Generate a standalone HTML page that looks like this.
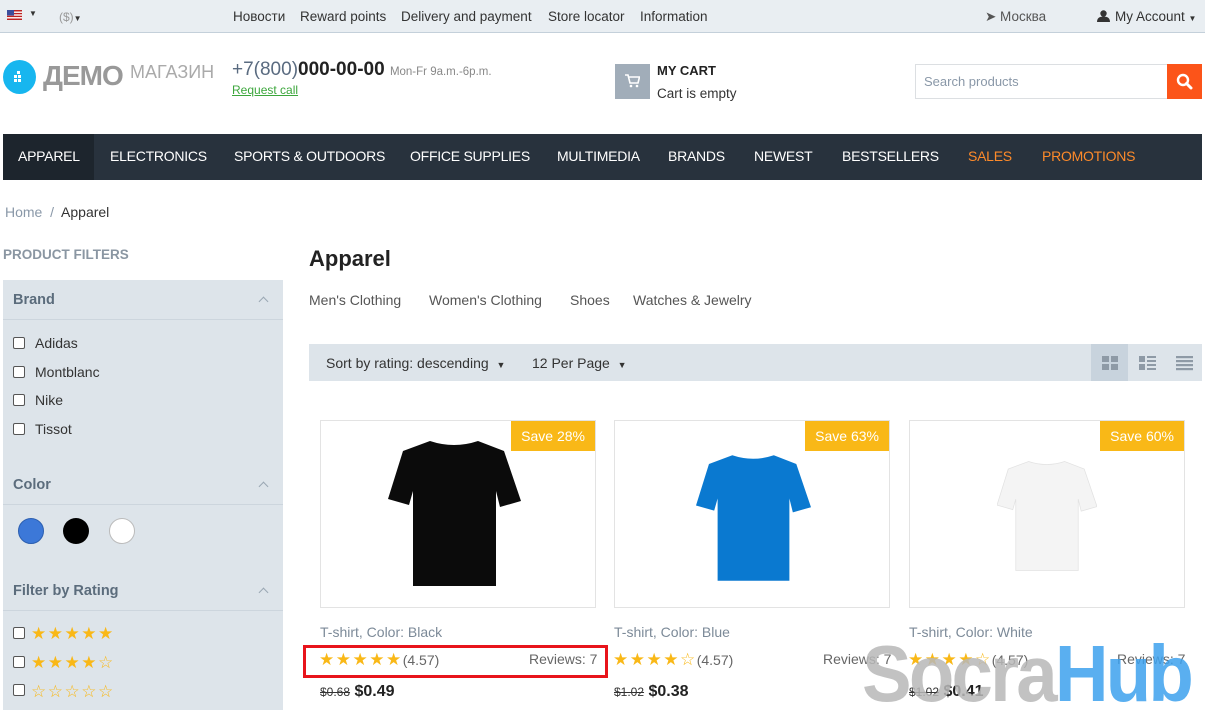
<!DOCTYPE html>
<html><head><meta charset="utf-8">
<style>
*{box-sizing:border-box;margin:0;padding:0}
body{width:1205px;height:710px;overflow:hidden;background:#fff;font-family:"Liberation Sans","DejaVu Sans",sans-serif;color:#333;position:relative}
.a{position:absolute;white-space:nowrap}
.top{left:0;top:0;width:1205px;height:33px;background:#e9eef2;border-bottom:1px solid #c4d0da}
.top .a{top:9px;font-size:13.5px;color:#333}
.nav{left:3px;top:134px;width:1199px;height:46px;background:#28323d}
.nav .a{top:14px;font-size:14px;color:#fff;letter-spacing:-0.25px}
.side{left:3px;top:280px;width:280px;height:430px;background:#dde4ea}
.fh{font-size:14.5px;font-weight:bold;color:#5b6c7c}
.hr{height:1px;background:#ccd5dd;width:280px;left:0}
.cb{width:12px;height:12px;border:1px solid #555;background:#fff;border-radius:2px}
.lbl{font-size:14px;color:#333}
.chev{width:7px;height:7px;border-left:1.5px solid #9aa7b3;border-top:1.5px solid #9aa7b3;transform:rotate(45deg)}
.card{width:276px;height:188px;border:1px solid #e3e3e3;top:420px;background:#fff}
.save{top:0;right:0;background:#f9b817;color:#fff;font-size:14px;padding:7px 10px;height:30px}
.pn{top:624px;font-size:14px;color:#7c8a98}
.rv{top:650px;font-size:14px;color:#555}
.st{color:#f9b817;font-size:17px;letter-spacing:1.5px}
.pr{top:683px;font-size:16px;font-weight:bold;color:#222}
.pr s{font-size:12px;font-weight:normal;color:#333}
</style></head><body>
<div class="a top">
 <svg class="a" style="left:7px;top:10px" width="15" height="10"><rect width="15" height="10" fill="#b22"/><rect y="1.5" width="15" height="1.4" fill="#fff"/><rect y="4.3" width="15" height="1.4" fill="#fff"/><rect y="7.1" width="15" height="1.4" fill="#fff"/><rect width="7" height="5.5" fill="#3a4d9c"/></svg>
 <span class="a" style="left:29px;top:9px;font-size:8px;color:#333">▼</span>
 <span class="a" style="left:59px;color:#999;font-size:12px;top:10px">($)<span style="font-size:8px;color:#333">▼</span></span>
 <span class="a" style="left:233px">Новости</span>
 <span class="a" style="left:300px">Reward points</span>
 <span class="a" style="left:401px">Delivery and payment</span>
 <span class="a" style="left:548px">Store locator</span>
 <span class="a" style="left:640px">Information</span>
 <span class="a" style="left:985px;color:#555">➤ Москва</span>
 <svg class="a" style="left:1097px;top:10px" width="13" height="12"><circle cx="6.5" cy="3.5" r="3.2" fill="#333"/><path d="M0 12 Q0 6.5 6.5 6.5 Q13 6.5 13 12Z" fill="#333"/></svg>
 <span class="a" style="left:1115px">My Account <span style="font-size:8px">▼</span></span>
</div>
<div class="a" style="left:3px;top:60px;width:33px;height:34px;border-radius:50%;background:#17b6ef"></div>
<svg class="a" style="left:14px;top:71px" width="12" height="12"><rect x="3" y="0" width="3" height="3" fill="#fff"/><rect x="0" y="4" width="3" height="3" fill="#fff"/><rect x="4" y="4" width="3" height="3" fill="#fff"/><rect x="0" y="8" width="3" height="3" fill="#fff"/><rect x="4" y="8" width="3" height="3" fill="#fff"/></svg>
<span class="a" style="left:43px;top:60px;font-size:28px;font-weight:bold;color:#999;letter-spacing:-1px">ДЕМО</span>
<span class="a" style="left:130px;top:62px;font-size:18px;color:#aaa">МАГАЗИН</span>
<span class="a" style="left:232px;top:59px;font-size:19px;color:#5a6b80">+7(800)<b style="color:#222">000-00-00</b> <span style="font-size:11.5px;color:#888">Mon-Fr 9a.m.-6p.m.</span></span>
<span class="a" style="left:232px;top:83px;font-size:12px;color:#3ca63c;text-decoration:underline">Request call</span>
<div class="a" style="left:615px;top:64px;width:35px;height:35px;background:#a1adb9"></div>
<svg class="a" style="left:625px;top:74px" width="15" height="14"><path d="M0 1h3l2 8h8l1.5-6H4" fill="none" stroke="#fff" stroke-width="1.6"/><circle cx="6" cy="12" r="1.3" fill="#fff"/><circle cx="12" cy="12" r="1.3" fill="#fff"/></svg>
<span class="a" style="left:657px;top:63px;font-size:13px;font-weight:bold;color:#222">MY CART</span>
<span class="a" style="left:657px;top:86px;font-size:13.5px;color:#333">Cart is empty</span>
<div class="a" style="left:915px;top:64px;width:253px;height:35px;border:1px solid #dcdfe2"></div>
<span class="a" style="left:924px;top:74px;font-size:13px;color:#8a98a8">Search products</span>
<div class="a" style="left:1167px;top:64px;width:35px;height:35px;background:#fc5419"></div>
<svg class="a" style="left:1176px;top:73px" width="17" height="17"><circle cx="7" cy="7" r="5" fill="none" stroke="#fff" stroke-width="2.4"/><path d="M10.5 10.5L15 15" stroke="#fff" stroke-width="3" stroke-linecap="round"/></svg>
<div class="a nav">
 <div class="a" style="left:0;top:0;width:91px;height:46px;background:#1d252d"></div>
 <span class="a" style="left:15px">APPAREL</span>
 <span class="a" style="left:107px">ELECTRONICS</span>
 <span class="a" style="left:231px">SPORTS &amp; OUTDOORS</span>
 <span class="a" style="left:407px">OFFICE SUPPLIES</span>
 <span class="a" style="left:554px">MULTIMEDIA</span>
 <span class="a" style="left:665px">BRANDS</span>
 <span class="a" style="left:751px">NEWEST</span>
 <span class="a" style="left:839px">BESTSELLERS</span>
 <span class="a" style="left:965px;color:#fd8a2a">SALES</span>
 <span class="a" style="left:1039px;color:#fd8a2a">PROMOTIONS</span>
</div>
<span class="a" style="left:5px;top:204px;font-size:14px;color:#8a98a8">Home &nbsp;/&nbsp; <span style="color:#333">Apparel</span></span>
<span class="a" style="left:3px;top:247px;font-size:13.5px;font-weight:bold;color:#8a96a2">PRODUCT FILTERS</span>
<div class="a side">
 <span class="a fh" style="left:10px;top:12px">Brand</span><div class="a chev" style="left:257px;top:18px"></div>
 <div class="a hr" style="top:39px"></div>
 <div class="a cb" style="left:10px;top:57px"></div><span class="a lbl" style="left:32px;top:55px">Adidas</span>
 <div class="a cb" style="left:10px;top:86px"></div><span class="a lbl" style="left:32px;top:84px">Montblanc</span>
 <div class="a cb" style="left:10px;top:114px"></div><span class="a lbl" style="left:32px;top:112px">Nike</span>
 <div class="a cb" style="left:10px;top:143px"></div><span class="a lbl" style="left:32px;top:141px">Tissot</span>
 <span class="a fh" style="left:10px;top:197px">Color</span><div class="a chev" style="left:257px;top:203px"></div>
 <div class="a hr" style="top:224px"></div>
 <div class="a" style="left:15px;top:238px;width:26px;height:26px;border-radius:50%;background:#3c78d8;border:1px solid #2c5fb0"></div>
 <div class="a" style="left:60px;top:238px;width:26px;height:26px;border-radius:50%;background:#000"></div>
 <div class="a" style="left:106px;top:238px;width:26px;height:26px;border-radius:50%;background:#fff;border:1px solid #bbb"></div>
 <span class="a fh" style="left:10px;top:303px">Filter by Rating</span><div class="a chev" style="left:257px;top:309px"></div>
 <div class="a hr" style="top:330px"></div>
 <div class="a cb" style="left:10px;top:347px"></div><span class="a st" style="left:28px;top:344px">★★★★★</span>
 <div class="a cb" style="left:10px;top:376px"></div><span class="a st" style="left:28px;top:373px">★★★★☆</span>
 <div class="a cb" style="left:10px;top:404px"></div><span class="a st" style="left:28px;top:402px">☆☆☆☆☆</span>
</div>
<span class="a" style="left:309px;top:246px;font-size:22px;font-weight:bold;color:#222">Apparel</span>
<span class="a" style="left:309px;top:292px;font-size:14px;color:#555">Men's Clothing</span>
<span class="a" style="left:429px;top:292px;font-size:14px;color:#555">Women's Clothing</span>
<span class="a" style="left:570px;top:292px;font-size:14px;color:#555">Shoes</span>
<span class="a" style="left:633px;top:292px;font-size:14px;color:#555">Watches &amp; Jewelry</span>
<div class="a" style="left:309px;top:344px;width:893px;height:37px;background:#dde4ea"></div>
<span class="a" style="left:326px;top:355px;font-size:14px;color:#333">Sort by rating: descending &nbsp;<span style="font-size:9px">▼</span></span>
<span class="a" style="left:532px;top:355px;font-size:14px;color:#333">12 Per Page &nbsp;<span style="font-size:9px">▼</span></span>
<div class="a" style="left:1091px;top:344px;width:37px;height:37px;background:#c8d3dd"></div>
<svg class="a" style="left:1102px;top:356px" width="16" height="15" fill="#8e9aa6"><rect x="0" y="0" width="7" height="6"/><rect x="9" y="0" width="7" height="6"/><rect x="0" y="8" width="7" height="6"/><rect x="9" y="8" width="7" height="6"/></svg>
<svg class="a" style="left:1139px;top:356px" width="17" height="15" fill="#8e9aa6"><rect x="0" y="0" width="6" height="6"/><rect x="0" y="8" width="6" height="6"/><rect x="8" y="0" width="9" height="2"/><rect x="8" y="4" width="9" height="2"/><rect x="8" y="8" width="9" height="2"/><rect x="8" y="12" width="9" height="2"/></svg>
<svg class="a" style="left:1176px;top:356px" width="17" height="15" fill="#8e9aa6"><rect y="0" width="17" height="2.2"/><rect y="4" width="17" height="2.2"/><rect y="8" width="17" height="2.2"/><rect y="12" width="17" height="2.2"/></svg>

<div class="a card" style="left:320px"><div class="a save">Save 28%</div>
<svg class="a" style="left:67px;top:20px" width="133" height="145" viewBox="0 0 133 145"><path d="M42 0 Q66 8 90 0 L116 10 L133 60 L112 66 L108 50 L108 145 L25 145 L25 50 L21 64 L0 58 L15 10 Z" fill="#0b0b0b"/></svg></div>
<div class="a card" style="left:614px"><div class="a save">Save 63%</div>
<svg class="a" style="left:81px;top:32px" width="115" height="130" viewBox="0 0 133 145"><path d="M42 0 Q66 8 90 0 L116 10 L133 60 L112 66 L108 50 L108 145 L25 145 L25 50 L21 64 L0 58 L15 10 Z" fill="#0a79d0"/></svg></div>
<div class="a card" style="left:909px"><div class="a save">Save 60%</div>
<svg class="a" style="left:87px;top:35px" width="100" height="120" viewBox="0 0 133 145"><path d="M42 0 Q66 8 90 0 L116 10 L133 60 L112 66 L108 50 L108 145 L25 145 L25 50 L21 64 L0 58 L15 10 Z" fill="#f4f4f4" stroke="#e2e2e2"/></svg></div>

<span class="a pn" style="left:320px">T-shirt, Color: Black</span>
<span class="a pn" style="left:614px">T-shirt, Color: Blue</span>
<span class="a pn" style="left:909px">T-shirt, Color: White</span>
<span class="a rv" style="left:319px"><span class="st">★★★★★</span><span style="color:#666">(4.57)</span></span><span class="a rv" style="left:529px;color:#666;top:651px">Reviews: 7</span>
<span class="a rv" style="left:613px"><span class="st">★★★★☆</span><span style="color:#666">(4.57)</span></span><span class="a rv" style="left:823px;color:#666;top:651px">Reviews: 7</span>
<span class="a rv" style="left:908px"><span class="st">★★★★☆</span><span style="color:#666">(4.57)</span></span><span class="a rv" style="left:1117px;color:#666;top:651px">Reviews: 7</span>
<span class="a pr" style="left:320px"><s>$0.68</s> $0.49</span>
<span class="a pr" style="left:614px"><s>$1.02</s> $0.38</span>
<span class="a pr" style="left:909px"><s>$1.02</s> $0.41</span>
<div class="a" style="left:303px;top:645px;width:305px;height:33px;border:3px solid #e8141b"></div>
<span class="a" style="left:862px;top:634px;font-size:80px;font-weight:bold;letter-spacing:-3px;opacity:.85;line-height:80px;transform:scaleX(0.93);transform-origin:left top"><span style="color:#b8b8b8">Socra</span><span style="color:#3ea2ee">Hub</span></span>
</body></html>
